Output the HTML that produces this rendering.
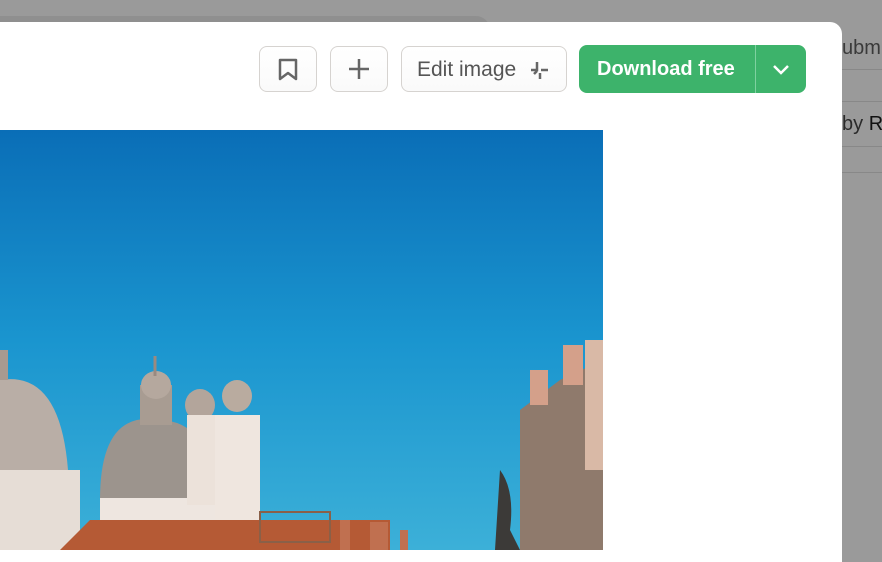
<!DOCTYPE html>
<html><head><style>
body{margin:0;width:882px;height:550px;overflow:hidden;background:#9a9a9a;font-family:"Liberation Sans",sans-serif;position:relative}
.bar{position:absolute;left:0;top:16px;width:490px;height:20px;background:#8f8f8f;border-radius:0 14px 0 0}
.modal{position:absolute;left:0;top:22px;width:842px;height:540px;background:#fff;border-radius:0 12px 0 0}
.btn{position:absolute;top:46px;height:44px;border:1px solid #d6d3d0;border-radius:8px;background:linear-gradient(#fff,#fafafa);box-sizing:content-box}
.dl{position:absolute;left:579px;top:45px;width:227px;height:48px;background:#3db36b;border-radius:8px;color:#fff;font-size:20px;font-weight:bold}
.side{position:absolute;left:842px;width:40px;overflow:hidden;white-space:nowrap;color:#333;font-size:20px}
.line{position:absolute;left:842px;width:40px;height:1px;background:#888}
</style></head><body>
<div class="bar"></div>
<div class="side" style="top:37px;color:#3a3a3a">ubm</div>
<div class="line" style="top:69px"></div>
<div class="line" style="top:101px"></div>
<div class="side" style="top:113px;color:#2a2a2a">by <span style="color:#111">Re</span></div>
<div class="line" style="top:146px"></div>
<div class="line" style="top:172px"></div>
<div class="modal"></div>
<div class="btn" style="left:259px;width:56px">
<svg width="56" height="44" viewBox="0 0 56 44"><path d="M20 13h16v19l-8-6-8 6z" fill="none" stroke="#666" stroke-width="2.5" stroke-linejoin="round"/></svg></div>
<div class="btn" style="left:330px;width:56px">
<svg width="56" height="44" viewBox="0 0 56 44"><path d="M28 12v20M18 22h20" stroke="#666" stroke-width="2.5"/></svg></div>
<div class="btn" style="left:401px;width:164px">
<span style="position:absolute;left:15px;top:11px;font-size:21px;color:#555">Edit image</span>
<svg style="position:absolute;left:126px;top:12px" width="24" height="22" viewBox="0 0 24 22"><path d="M9 3v8H3M13 11h7M12 14v6M6 15l3-3" stroke="#666" stroke-width="2.5" fill="none"/></svg></div>
<div class="dl"><span style="position:absolute;left:18px;top:13px">Download free</span>
<div style="position:absolute;left:176px;top:0;width:1px;height:48px;background:#7fd1a0"></div>
<svg style="position:absolute;left:191px;top:15px" width="22" height="18" viewBox="0 0 22 18"><path d="M4 6l7 7 7-7" stroke="#fff" stroke-width="2.5" fill="none"/></svg></div>
<svg style="position:absolute;left:0;top:130px" width="603" height="420" viewBox="0 130 603 420">
<defs><linearGradient id="s" x1="0" y1="0" x2="0" y2="1"><stop offset="0" stop-color="#0a6eb7"/><stop offset="0.5" stop-color="#1a95cf"/><stop offset="1" stop-color="#3cb0d8"/></linearGradient></defs>
<rect x="0" y="130" width="603" height="420" fill="url(#s)"/>
<path d="M0 380Q60 370 68 470H0z" fill="#b9aea6"/>
<rect x="0" y="470" width="80" height="80" fill="#e6ddd6"/>
<path d="M0 350h8v30H0z" fill="#a89a90"/>
<path d="M100 500Q100 410 158 420Q212 420 214 500z" fill="#9c948d"/>
<rect x="140" y="385" width="32" height="40" fill="#a89c92"/>
<ellipse cx="156" cy="385" rx="15" ry="14" fill="#b5a89e"/>
<path d="M155 356v20" stroke="#9a8a80" stroke-width="3"/>
<rect x="100" y="498" width="115" height="52" fill="#eee6e0"/>
<ellipse cx="200" cy="405" rx="15" ry="16" fill="#b3a59b"/>
<rect x="187" y="415" width="30" height="90" fill="#ece2da"/>
<ellipse cx="237" cy="396" rx="15" ry="16" fill="#b9ab9f"/>
<rect x="215" y="415" width="45" height="135" fill="#efe6df"/>
<path d="M60 550l30-30h300v30z" fill="#b55a35"/>
<rect x="260" y="512" width="70" height="30" fill="none" stroke="#8a6048" stroke-width="2"/>
<rect x="340" y="520" width="10" height="30" fill="#c07050"/><rect x="370" y="522" width="18" height="28" fill="#c07050"/><rect x="400" y="530" width="8" height="20" fill="#c07050"/>
<path d="M520 410L560 380L603 360V550H520z" fill="#8f7a6c"/>
<rect x="530" y="370" width="18" height="35" fill="#d4a08a"/>
<rect x="563" y="345" width="20" height="40" fill="#d4a08a"/>
<rect x="585" y="340" width="18" height="130" fill="#d9b9a6"/>
<path d="M500 470q15 20 10 60l10 20h-25z" fill="#3c3a38"/>
</svg>
</body></html>
